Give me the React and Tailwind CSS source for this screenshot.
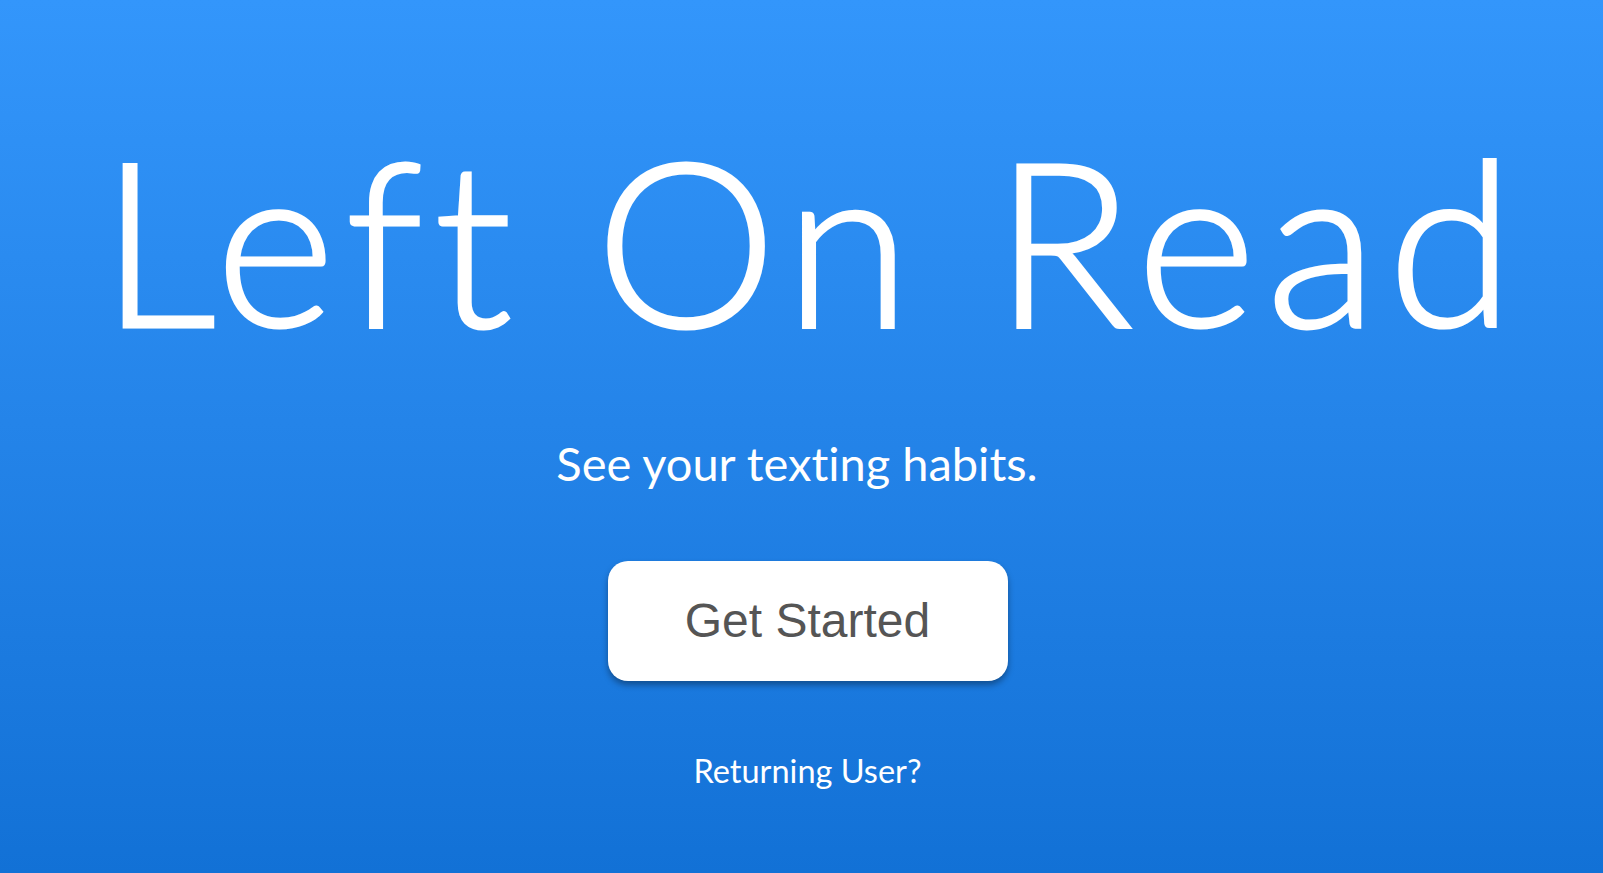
export default function App() {
  return (
    <div className="flex min-h-screen w-full flex-col items-center bg-gradient-to-b from-[#3396fb] to-[#1271d6] pl-[12px] text-white [font-variant-ligatures:none]">
      <h1 className="pl-[10px] pt-[124px] text-[229px] font-light leading-none tracking-[10.6px] [-webkit-text-stroke:3px_white] [font-family:Lato,'Open_Sans',sans-serif]">
        Left On Read
      </h1>
      <p className="mt-[87px] pr-[21px] text-[47px] leading-none [font-family:Lato,sans-serif]">
        See your texting habits.
      </p>
      <button
        type="button"
        className="mt-[74px] flex h-[120px] w-[400px] items-center justify-center rounded-[20px] bg-white text-[48px] text-[#555] shadow-[0_4px_6px_rgba(0,0,0,0.35)] [font-family:'Liberation_Sans',Arial,sans-serif]"
      >
        Get Started
      </button>
      <a href="#" className="mt-[74px] text-[32.5px] leading-none text-white [font-family:Lato,sans-serif]">
        Returning User?
      </a>
    </div>
  );
}
